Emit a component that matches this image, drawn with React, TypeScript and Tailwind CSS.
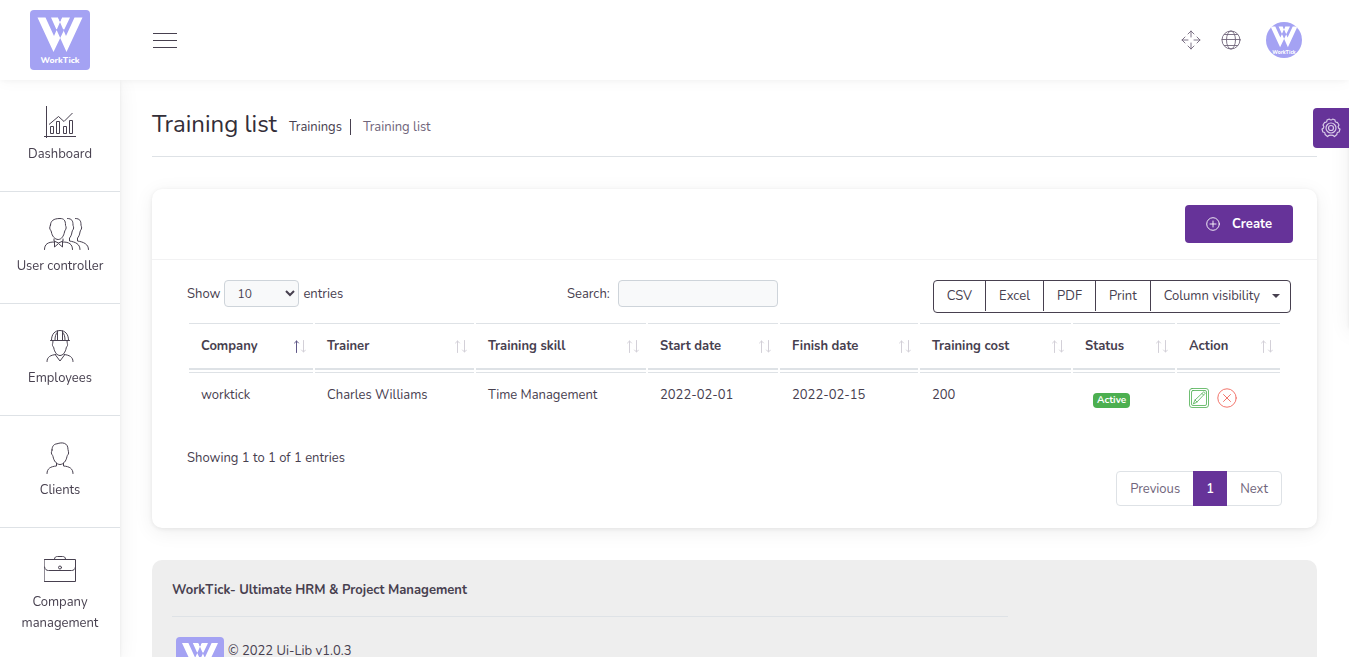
import type { ReactNode } from "react";

const stroke = {
  fill: "none",
  stroke: "currentColor",
  strokeLinecap: "round" as const,
  strokeLinejoin: "round" as const,
};

function Logo({ className }: { className: string }) {
  return (
    <svg viewBox="0 0 60 60" className={className} role="img" aria-label="WorkTick">
      <rect width="60" height="60" fill="#a4a2f3" />
      <path
        fill="#fff"
        d="M7.500 7.500h8L24 26l8-18.500h8L23.500 42zM52.500 7.500h-8L36 26 28 7.500h-7L36.500 42z"
      />
      <path d="M30 7l-1.500 0 1.500 4 1.500-4zM24.500 20.500l2.500-1M35.500 20.500l-2.500-1M27 20h6" fill="#a4a2f3" stroke="#a4a2f3" strokeWidth=".8" />
      <text x="30" y="52.500" textAnchor="middle" fontSize="8.500" fontWeight="800" fill="#fff">
        WorkTick
      </text>
    </svg>
  );
}

function DashboardIcon() {
  return (
    <svg viewBox="0 0 32 32" className="h-8 w-8" {...stroke} strokeLinecap="butt">
      <path d="M2.500 0v32M0 30.500h32M5 18.500l9.500-8 5.500 5L28.500 7" />
      <path d="M6.500 20.500h3v7h-3zM12.500 15.500h3v12h-3zM19.500 20.500h3v7h-3zM25.500 14.500h3v13h-3z" />
    </svg>
  );
}

function UsersIcon() {
  return (
    <svg viewBox="0 0 45 32" className="ml-3 h-8 w-[45px]" {...stroke}>
      <path d="M6.500 7c0-4 3-6.500 9.500-6.500 4 0 5.500 2 5.500 6.500 0 1 .8 1.500.6 3-.2 2-1.300 2-1.600 4-.8 4-3 7.500-6.300 7.500S8 18 7.400 14c-.4-2-1.500-2-1.700-4C5.600 8.500 6.500 8 6.500 7z" />
      <path d="M10 21v2l4.500 2 4.500-2v-2M10.500 23.500V29l4-3.500 4 3.500v-5.500M10 24C4 24 .5 26 .5 31.500M19 24c6 0 9.500 2 9.500 7.500" />
      <path d="M23.500.5C28 .5 29 3 29 7c0 1 .8 1.500.6 3-.2 2-1.300 2-1.600 4-.4 3-1.500 5-2.500 6v3c6 1 10.500 3 10.500 8.500M31.500.5C36 .5 37 3 37 7c0 1 .8 1.500.6 3-.2 2-1.300 2-1.600 4-.4 3-1.500 5-2.500 6v3c6 1 11 3 11 8.500" />
    </svg>
  );
}

function EmployeesIcon() {
  return (
    <svg viewBox="0 0 32 32" className="h-8 w-8" {...stroke}>
      <path d="M6.500 10.500h19M7.500 10C7.500 4 11 .5 16 .5S24.500 4 24.500 10M13.500 10V1M18.500 10V1M13.500 2c-2 2-2.500 5-2.500 8M18.500 2c2 2 2.500 5 2.500 8" />
      <path d="M9 10.500c0 3-.8 3.500-.5 5 .3 1 1 1 1.300 2.500.7 4 3.200 7.500 6.200 7.500s5.500-3.500 6.200-7.500c.3-1.500 1-1.500 1.300-2.500.3-1.500-.5-2-.5-5" />
      <path d="M12 24.500c-5.500.5-9 2.500-9 7M20 24.500c5.500.5 9 2.500 9 7M11.500 25l4.500 6 4.500-6" />
    </svg>
  );
}

function ClientsIcon() {
  return (
    <svg viewBox="0 0 32 32" className="h-8 w-8" {...stroke}>
      <path d="M8 8c0-4.500 2.500-6 5-6.200C18 0 24 .5 24 7.500c0 1.500.8 2 .6 3.500-.2 2-1.300 1.800-1.600 3.500-.8 4.500-3.600 8-7 8s-6.200-3.500-7-8c-.3-1.700-1.400-1.500-1.600-3.500C7.200 9.500 8 9.500 8 8z" />
      <path d="M12.500 21v3C6.500 24.500 3 26.500 3 31.500M19.500 21v3c6 .5 9.500 2.500 9.500 7.500" />
    </svg>
  );
}

function BriefcaseIcon() {
  return (
    <svg viewBox="0 0 32 32" className="h-8 w-8" {...stroke}>
      <path d="M.5 5.500h31v22H.5zM10.500 5c0-2 1.500-2.500 3-2.500h5c1.500 0 3 .5 3 2.500M.5 13c.5 2.500 2 3.500 4 3.500h23c2 0 3.500-1 4-3.500" />
      <circle cx="16" cy="13.500" r="1.500" />
    </svg>
  );
}

const navItems: { label: string; icon: ReactNode }[] = [
  { label: "Dashboard", icon: <DashboardIcon /> },
  { label: "User controller", icon: <UsersIcon /> },
  { label: "Employees", icon: <EmployeesIcon /> },
  { label: "Clients", icon: <ClientsIcon /> },
  { label: "Company management", icon: <BriefcaseIcon /> },
];

function Header() {
  return (
    <header className="fixed inset-x-0 top-0 z-20 flex h-20 items-center bg-white shadow-[0_1px_15px_rgba(0,0,0,0.04),0_1px_6px_rgba(0,0,0,0.04)]">
      <a href="#home" className="flex w-[120px] justify-center">
        <Logo className="h-[60px] w-[60px] rounded" />
      </a>
      <button type="button" aria-label="Toggle menu" className="ml-[33px] flex w-6 flex-col gap-1.5 text-[#47404f]">
        <span className="h-px w-full bg-current" />
        <span className="h-px w-full bg-current" />
        <span className="h-px w-full bg-current" />
      </button>
      <div className="ml-auto mr-[47px] flex items-center text-[#70657b]">
        <button type="button" aria-label="Full screen">
          <svg viewBox="0 0 20 20" className="h-5 w-5" {...stroke} strokeWidth=".9">
            <path d="M10 7V1M7 4l3-3 3 3M10 13v6M7 16l3 3 3-3M7 10H1M4 7l-3 3 3 3M13 10h6M16 7l3 3-3 3" />
          </svg>
        </button>
        <button type="button" aria-label="Language" className="ml-5">
          <svg viewBox="0 0 20 20" className="h-5 w-5" {...stroke} strokeWidth=".9">
            <circle cx="10" cy="10" r="9" />
            <ellipse cx="10" cy="10" rx="4.500" ry="9" />
            <path d="M1 9.500h18M3.500 4.500h13M3.500 15.500h13" />
          </svg>
        </button>
        <button type="button" aria-label="Account" className="ml-[25px]">
          <Logo className="h-9 w-9 rounded-full" />
        </button>
      </div>
    </header>
  );
}

function Sidebar() {
  return (
    <nav className="fixed bottom-0 left-0 top-20 z-10 w-[120px] overflow-hidden bg-white shadow-[0_4px_20px_1px_rgba(0,0,0,0.06),0_1px_4px_rgba(0,0,0,0.08)]">
      <ul>
        {navItems.map((item) => (
          <li key={item.label} className="border-b border-[#dee2e6]">
            <a href="#section" className="flex min-h-[111px] flex-col items-center px-2 py-[26px] text-center text-[#47404f]">
              {item.icon}
              <span className="mt-1.5 leading-[21px]">{item.label}</span>
            </a>
          </li>
        ))}
      </ul>
    </nav>
  );
}

const columns = [
  { label: "Company", width: "w-[124px]" },
  { label: "Trainer", width: "w-[159px]" },
  { label: "Training skill", width: "w-[170px]" },
  { label: "Start date", width: "w-[130px]" },
  { label: "Finish date", width: "w-[138px]" },
  { label: "Training cost", width: "w-[151px]" },
  { label: "Status", width: "w-[102px]" },
  { label: "Action", width: "w-[103px]" },
];

const cell = "border-t border-[#dee2e6] p-3 align-top leading-5";

function SortArrows({ ascending }: { ascending: boolean }) {
  return (
    <svg viewBox="0 0 12 13" className="h-[13px] w-3" {...stroke}>
      <path d="M2.500 12.500V1M.5 3l2-2 2 2" stroke={ascending ? "#5f5787" : "#d3d0d8"} />
      <path d="M9.500.5V12M7.500 10l2 2 2-2" stroke="#d3d0d8" />
    </svg>
  );
}

function TrainingTable() {
  return (
    <table className="w-full table-fixed border-separate border-spacing-0.5 text-left">
      <thead>
        <tr>
          {columns.map((column, index) => (
            <th
              key={column.label}
              scope="col"
              className={`${column.width} border-b-2 border-t border-[#dee2e6] py-3 pl-3 pr-[7px] font-bold`}
            >
              <span className="flex items-center justify-between leading-5">
                {column.label}
                <SortArrows ascending={index === 0} />
              </span>
            </th>
          ))}
        </tr>
      </thead>
      <tbody>
        <tr>
          <td className={cell}>worktick</td>
          <td className={cell}>Charles Williams</td>
          <td className={cell}>Time Management</td>
          <td className={cell}>2022-02-01</td>
          <td className={cell}>2022-02-15</td>
          <td className={cell}>200</td>
          <td className={cell}>
            <span className="ml-2 mt-2 inline-block rounded bg-[#4caf50] px-1 text-[10px] font-bold leading-[15px] text-white">
              Active
            </span>
          </td>
          <td className={cell}>
            <span className="mt-[3px] flex gap-2">
              <a href="#edit" aria-label="Edit" className="text-[#4caf50]">
                <svg viewBox="0 0 20 20" className="h-5 w-5" {...stroke} strokeWidth=".8">
                  <rect x=".5" y=".5" width="19" height="19" rx="2.500" />
                  <rect x="2.500" y="2.500" width="15" height="15" rx="1.500" />
                  <path d="M4.500 15.500l1.500-3.500 8.500-8c1 0 1.500.5 1.500 1.500L8 14zM6 12l2 2M13 5.500L14.500 7" />
                </svg>
              </a>
              <a href="#delete" aria-label="Delete" className="text-[#f0655b]">
                <svg viewBox="0 0 20 20" className="h-5 w-5" {...stroke} strokeWidth=".9">
                  <circle cx="10" cy="10" r="9.200" />
                  <path d="M6.500 6.500l7 7M13.500 6.500l-7 7" />
                </svg>
              </a>
            </span>
          </td>
        </tr>
      </tbody>
    </table>
  );
}

function TableControls() {
  const button = "border-r border-[#47404f] px-[13px] leading-[30px]";
  return (
    <div className="-mr-[9px] grid grid-cols-[380fr_365fr_359fr] items-start">
      <label className="flex items-center gap-1">
        Show
        <select defaultValue="10" className="h-[27px] w-[75px] rounded border border-[#ced4da] bg-[#f8f9fa] px-2 text-xs">
          <option>10</option>
          <option>25</option>
          <option>50</option>
          <option>100</option>
        </select>
        entries
      </label>
      <label className="flex items-center gap-2">
        Search:
        <input type="search" className="h-[27px] w-40 rounded border border-[#ced4da] bg-[#f8f9fa] px-2" />
      </label>
      <div className="flex justify-self-end whitespace-nowrap rounded border border-[#47404f] pb-px">
        <button type="button" className={button}>CSV</button>
        <button type="button" className={button}>Excel</button>
        <button type="button" className={button}>PDF</button>
        <button type="button" className={button}>Print</button>
        <button type="button" className="flex items-center gap-3 pl-[13px] pr-2.5 leading-[30px]">
          Column visibility
          <svg viewBox="0 0 8 4" className="h-1 w-2" fill="currentColor">
            <path d="M0 0h8L4 4z" />
          </svg>
        </button>
      </div>
    </div>
  );
}

function Pagination() {
  return (
    <div className="flex justify-end">
      <div className="flex h-[35px] rounded border border-[#dee2e6] text-[#70657b]">
        <button type="button" className="px-[13px]">Previous</button>
        <button type="button" aria-current="page" className="-my-px w-[34px] bg-[#663399] font-semibold text-white">
          1
        </button>
        <button type="button" className="px-[13px]">Next</button>
      </div>
    </div>
  );
}

function Customizer() {
  return (
    <aside>
      <div className="fixed right-0 top-[108px] h-[220px] w-56 translate-x-full bg-white shadow-[0_4px_20px_1px_rgba(0,0,0,0.06),0_1px_4px_rgba(0,0,0,0.08)]" />
      <button
        type="button"
        aria-label="Customize"
        className="fixed right-0 top-[108px] z-10 flex h-10 w-9 items-center justify-center rounded-l bg-[#663399] text-[#d9cbe8]"
      >
        <svg viewBox="0 0 20 20" className="h-5 w-5" {...stroke} strokeWidth="1.200">
          <path d="M8.300 1c1 1.300 2.400 1.300 3.400 0l2.300 1c-.2 1.600.8 2.500 2.300 2.300L18 7c-1 1-1.200 2-.5 3 .7.700 1.500 1 1.500 1l-.9 3c-1.600.1-2.300 1-2.200 2.500L13.500 18.500c-1-1-2-1.300-3.500-1.300s-2.500.3-3.500 1.300L4.100 16.500c.1-1.500-.6-2.400-2.200-2.500L1 11s.8-.3 1.500-1c.7-1 .5-2-.5-3l1.700-2.700C5.200 4.500 6.200 3.600 6 2z" />
          <circle cx="10" cy="10" r="5" />
          <circle cx="10" cy="10" r="2.500" />
        </svg>
      </button>
    </aside>
  );
}

export default function App() {
  return (
    <div className="h-screen overflow-hidden bg-white font-['Nunito','Open_Sans',sans-serif] text-[13px] leading-5 text-[#47404f]">
      <Header />
      <Sidebar />
      <Customizer />
      <main className="ml-[120px] px-8 pt-20">
        <div className="flex h-[77px] items-center border-b border-[#dee2e6] pt-3">
          <h1 className="text-2xl font-normal text-[#332e38]">Training list</h1>
          <ul className="ml-3 flex items-center pt-1.5">
            <li>
              <a href="#trainings">Trainings</a>
            </li>
            <li className="ml-2 h-4 border-l border-[#47404f]" />
            <li className="ml-3 text-[#70657b]">Training list</li>
          </ul>
        </div>

        <section className="mt-8 rounded-[10px] bg-white shadow-[0_4px_20px_1px_rgba(0,0,0,0.06),0_1px_4px_rgba(0,0,0,0.08)]">
          <div className="flex justify-end border-b border-[#f2f2f3] py-4 pr-6">
            <a
              href="#create"
              className="flex h-[38px] min-w-[108px] items-center justify-center gap-3 rounded bg-[#663399] px-5 font-bold text-white"
            >
              <svg viewBox="0 0 14 14" className="h-3.5 w-3.5" {...stroke} strokeWidth=".9">
                <circle cx="7" cy="7" r="6.300" />
                <path d="M7 4v6M4 7h6" />
              </svg>
              Create
            </a>
          </div>
          <div className="px-[35px] pb-[22px] pt-5">
            <TableControls />
            <div className="mt-2">
              <TrainingTable />
            </div>
            <p className="mt-[25px]">Showing 1 to 1 of 1 entries</p>
            <div className="mt-[3px]">
              <Pagination />
            </div>
          </div>
        </section>

        <footer className="mt-8 rounded-[10px] bg-[#eeeeee] p-5">
          <div className="w-3/4 pr-2">
            <p className="font-bold">WorkTick- Ultimate HRM &amp; Project Management</p>
            <hr className="mt-4 border-[#dee2e6]" />
            <div className="mt-5 flex items-start gap-1 pl-1">
              <Logo className="h-12 w-12 rounded-sm" />
              <p className="pt-1">© 2022 Ui-Lib v1.0.3</p>
            </div>
          </div>
        </footer>
      </main>
    </div>
  );
}
